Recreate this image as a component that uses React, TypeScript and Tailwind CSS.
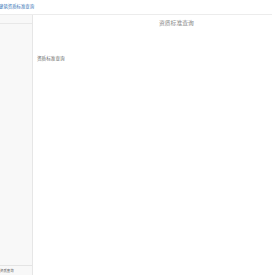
export default function App() {
  return (
    <div className="w-[272px] h-[275px] flex flex-col bg-white overflow-hidden" style={{ fontFamily: '"Noto Sans CJK SC", sans-serif' }}>
      <div className="h-[15px] shrink-0 border-b border-[#ececec] flex items-center">
        <span className="text-[4.4px] leading-none text-[#2f6fb5] whitespace-nowrap -ml-[1px] -mt-[1px]">建筑资质标准查询</span>
      </div>
      <div className="flex-1 flex min-h-0">
        <div className="w-[33px] shrink-0 bg-[#f8f8f8] border-r border-[#e6e6e6] flex flex-col">
          <div className="h-[9px] border-b border-[#e8e8e8]" />
          <div className="flex-1" />
          <div className="h-[10px] border-t border-[#e4e4e4] flex items-center">
            <span className="text-[3.4px] leading-none text-[#555] whitespace-nowrap">资质查询</span>
          </div>
        </div>
        <div className="flex-1 flex flex-col">
          <div className="pt-[5px] pl-[126px] text-[5.8px] leading-none text-[#8a8a8a] whitespace-nowrap">资质标准查询</div>
          <div className="mt-[30px] pl-[4px] text-[4.6px] leading-none text-[#666] whitespace-nowrap">资质标准查询</div>
        </div>
      </div>
    </div>
  );
}
